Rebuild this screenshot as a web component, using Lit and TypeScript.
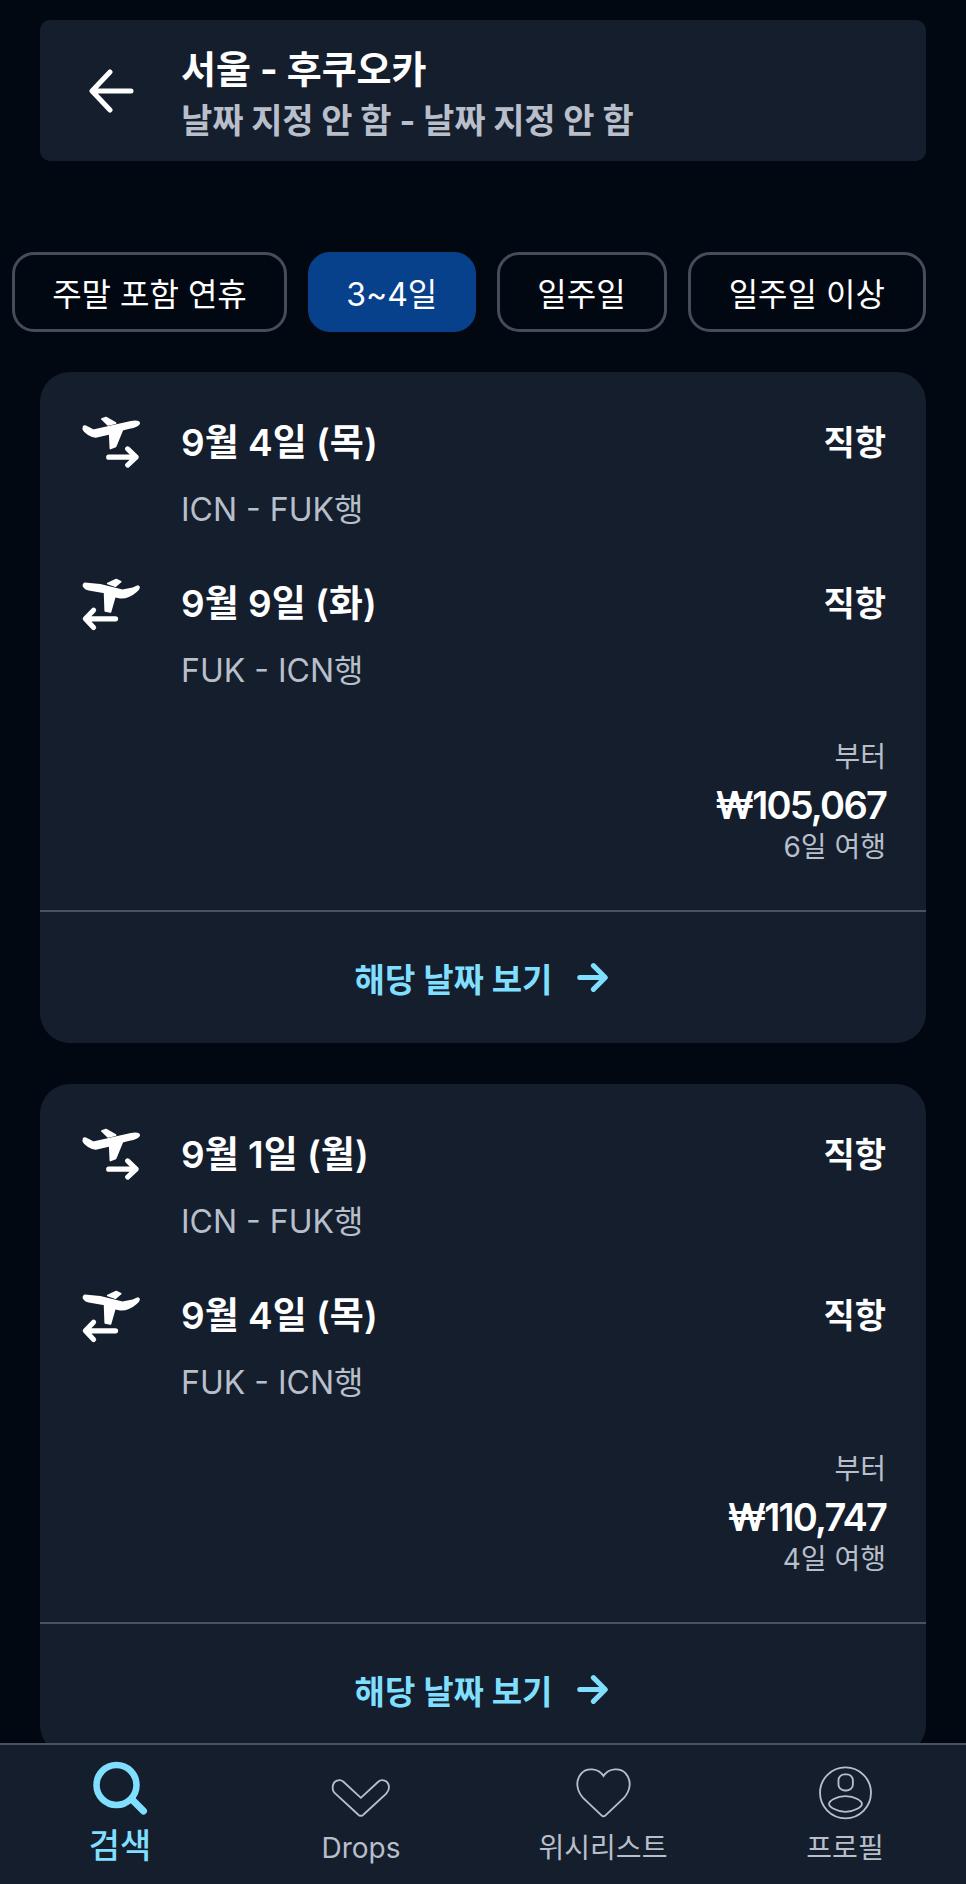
import { LitElement, html, css } from "lit";
import { customElement } from "lit/decorators.js";

const outIcon = html`<svg class="plane" viewBox="0 0 225 195" fill="#fff" stroke="#fff" stroke-width="5" stroke-linejoin="round">
  <path d="M80 32 L92 28 L120 44 L98 49 Z" />
  <path d="M27 54 C31 51 36 54 40 57 L55 65 L165 40 C180 37 192 40 188 46 C186 50 175 55 160 58 L140 63 L120 112 L105 118 L103 75 L62 84 C50 84 30 72 26 62 Z" />
  <path d="M100 143 H178 M155 119 L180 143 L155 166" fill="none" stroke-width="15" stroke-linecap="round" />
</svg>`;

const backIcon = html`<svg class="plane" viewBox="0 0 225 195" fill="#fff" stroke="#fff" stroke-width="5" stroke-linejoin="round">
  <path d="M97 42 L122 31 L135 37 L120 50 Z" />
  <path d="M30 42 L75 46 L140 62 L170 56 L184 50 C191 51 189 58 180 65 C165 78 145 85 130 83 L118 80 L105 125 L90 122 L88 68 L42 60 C30 58 22 48 30 42 Z" />
  <path d="M120 145 H36 M56 120 L32 145 L56 170" fill="none" stroke-width="15" stroke-linecap="round" />
</svg>`;

interface Leg { date: string; route: string; icon: unknown; }
interface Deal { legs: Leg[]; price: string; days: string; }

const deals: Deal[] = [
  {
    legs: [
      { date: "9월 4일 (목)", route: "ICN - FUK행", icon: outIcon },
      { date: "9월 9일 (화)", route: "FUK - ICN행", icon: backIcon },
    ],
    price: "₩105,067",
    days: "6일 여행",
  },
  {
    legs: [
      { date: "9월 1일 (월)", route: "ICN - FUK행", icon: outIcon },
      { date: "9월 4일 (목)", route: "FUK - ICN행", icon: backIcon },
    ],
    price: "₩110,747",
    days: "4일 여행",
  },
];

const chips = [
  { label: "주말 포함 연휴", width: 275 },
  { label: "3~4일", width: 167.5 },
  { label: "일주일", width: 170 },
  { label: "일주일 이상", width: 238.5 },
];

@customElement("app-root")
export class AppRoot extends LitElement {
  static styles = css`
    :host {
      display: block;
      position: relative;
      width: 966px;
      height: 1884px;
      overflow: hidden;
      background: #020811;
      font-family: Inter, "Noto Sans CJK KR", sans-serif;
      color: #fff;
    }
    .header {
      margin: 20px 40px 0;
      height: 141px;
      box-sizing: border-box;
      background: #141e2d;
      border-radius: 10px;
      display: flex;
      align-items: center;
      padding-left: 49px;
    }
    .header-back {
      width: 45px;
      height: 45px;
      margin-right: 47px;
      flex: none;
    }
    .header-text {
      padding-top: 8px;
    }
    .title {
      font-size: 38px;
      font-weight: 700;
      line-height: 50px;
    }
    .sub {
      font-size: 34px;
      font-weight: 700;
      line-height: 50px;
      margin-top: 2px;
      letter-spacing: -0.15px;
      color: #b8bfca;
    }
    .chips {
      display: flex;
      gap: 21px;
      margin: 91px 40px 0 12px;
    }
    .chip {
      box-sizing: border-box;
      height: 80px;
      border: 3px solid #454d5b;
      border-radius: 22px;
      display: flex;
      align-items: center;
      justify-content: center;
      font-size: 32px;
      flex: none;
    }
    .chip.on {
      background: #07418b;
      border-color: #07418b;
    }
    .cards {
      display: flex;
      flex-direction: column;
      gap: 41px;
      margin: 40px 40px 0;
    }
    .card {
      background: #141e2d;
      border-radius: 30px;
      height: 671px;
      flex: none;
      display: flex;
      flex-direction: column;
    }
    .legs {
      display: flex;
      flex-direction: column;
      gap: 25px;
      padding: 38px 40px 0 40px;
    }
    .leg {
      display: grid;
      grid-template-columns: 101px 1fr auto;
      grid-template-rows: 60px 74px;
      align-items: center;
      height: 136px;
    }
    .plane {
      width: 78px;
      height: 67px;
      grid-row: 1;
      margin-left: -6px;
      margin-top: 2px;
    }
    .date {
      font-size: 37px;
      font-weight: 600;
    }
    .direct {
      font-size: 34px;
      font-weight: 700;
    }
    .route {
      grid-column: 2;
      grid-row: 2;
      font-size: 32px;
      color: #b8bfca;
    }
    .fare {
      margin-top: 22px;
      padding-right: 40px;
      display: flex;
      flex-direction: column;
      align-items: flex-end;
      height: 154px;
    }
    .from {
      font-size: 28px;
      line-height: 40px;
      color: #b8bfca;
      margin-top: 8px;
    }
    .price {
      font-size: 38px;
      font-weight: 600;
      line-height: 52px;
      letter-spacing: -1.8px;
      margin-top: 2px;
    }
    .days {
      font-size: 28px;
      line-height: 34px;
      color: #b8bfca;
      margin-top: -1px;
    }
    .divider {
      height: 2px;
      background: #4a5261;
      margin-top: auto;
    }
    .link {
      height: 131px;
      flex: none;
      display: flex;
      align-items: center;
      justify-content: center;
      gap: 25px;
      color: #80dfff;
      font-size: 33px;
      font-weight: 700;
      padding-right: 3px;
    }
    .link svg {
      width: 31px;
      height: 31px;
    }
    .nav {
      position: absolute;
      left: 0;
      right: 0;
      bottom: 0;
      height: 141px;
      box-sizing: border-box;
      background: #141e2d;
      border-top: 2px solid #4a5261;
      display: grid;
      grid-template-columns: 240px 242px 242px 242px;
    }
    .tab {
      display: flex;
      flex-direction: column;
      align-items: center;
      color: #b8bfca;
      font-size: 28px;
      line-height: 36px;
    }
    .tab svg {
      width: 59px;
      height: 59px;
      margin-top: 19px;
      margin-bottom: 7px;
      fill: none;
      stroke: #b8bfca;
      overflow: visible;
      flex: none;
    }
    .tab.on {
      color: #80dfff;
      font-size: 34px;
      font-weight: 500;
    }
    .tab.on svg {
      stroke: #80dfff;
      margin-bottom: 5px;
    }
  `;

  render() {
    return html`
      <div class="header">
        <svg class="header-back" viewBox="0 0 45 45" fill="none" stroke="#fff" stroke-width="5" stroke-linecap="round" stroke-linejoin="round">
          <path d="M42 23 H4 M21 4 L3 23 L21 42" />
        </svg>
        <div class="header-text">
          <div class="title">서울 - 후쿠오카</div>
          <div class="sub">날짜 지정 안 함 - 날짜 지정 안 함</div>
        </div>
      </div>
      <div class="chips">
        ${chips.map(
          (c, i) => html`<div class="chip ${i === 1 ? "on" : ""}" style="width:${c.width}px">${c.label}</div>`
        )}
      </div>
      <div class="cards">
        ${deals.map(
          (d) => html`<div class="card">
            <div class="legs">
              ${d.legs.map(
                (l) => html`<div class="leg">
                  ${l.icon}
                  <div class="date">${l.date}</div>
                  <div class="direct">직항</div>
                  <div class="route">${l.route}</div>
                </div>`
              )}
            </div>
            <div class="fare">
              <div class="from">부터</div>
              <div class="price">${d.price}</div>
              <div class="days">${d.days}</div>
            </div>
            <div class="divider"></div>
            <div class="link">
              <span>해당 날짜 보기</span>
              <svg viewBox="0 0 34 34" fill="none" stroke="#80dfff" stroke-width="5.5" stroke-linecap="round" stroke-linejoin="round">
                <path d="M3 17 H30 M18 4 L31 17 L18 30" />
              </svg>
            </div>
          </div>`
        )}
      </div>
      <div class="nav">
        <div class="tab on">
          <svg viewBox="0 0 59 59">
            <circle cx="25.5" cy="21" r="20" stroke-width="6.5"></circle>
            <path d="M41.5 36 L52.5 47" stroke-width="7" stroke-linecap="round"></path>
          </svg>
          <span>검색</span>
        </div>
        <div class="tab">
          <svg viewBox="757 44 176 176"><path stroke-width="5.5" d="M843 145 L895 97 C905 88 925 92 927 112 C928 122 922 128 918 133 L852 194 C846 200 840 200 834 194 L768 133 C762 128 758 122 759 112 C761 92 781 88 791 97 Z"></path></svg>
          <span>Drops</span>
        </div>
        <div class="tab">
          <svg viewBox="43 44 176 176"><path stroke-width="5.5" d="M131 80 C115 55 80 55 65 72 C45 95 52 125 70 145 L125 197 C129 201 133 201 137 197 L192 145 C210 125 217 95 197 72 C182 55 147 55 131 80 Z"></path></svg>
          <span>위시리스트</span>
        </div>
        <div class="tab">
          <svg viewBox="768 44 176 176">
            <circle cx="856" cy="130" r="76" stroke-width="5.5"></circle>
            <rect x="835" y="75" width="43" height="48" rx="18" stroke-width="5.5"></rect>
            <path stroke-width="5.5" d="M856 140 C885 140 905 155 905 163 C905 172 880 187 856 187 C832 187 807 172 807 163 C807 155 827 140 856 140 Z"></path>
          </svg>
          <span>프로필</span>
        </div>
      </div>
    `;
  }
}
